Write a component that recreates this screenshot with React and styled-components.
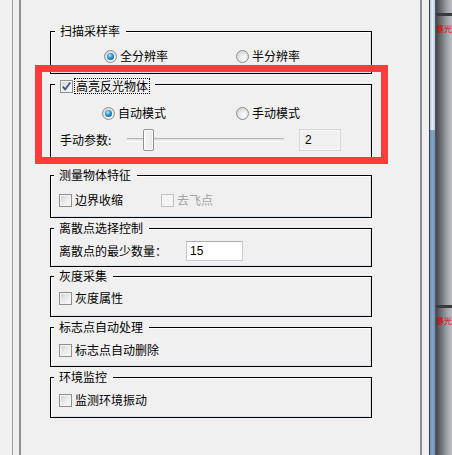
import React from "react";
import styled, { createGlobalStyle } from "styled-components";

const GlobalStyle = createGlobalStyle`
  html, body {
    margin: 0;
    padding: 0;
    background: #f0f0f0;
  }
  body {
    font-family: "Noto Sans CJK SC", "Liberation Sans", sans-serif;
    font-size: 12px;
    line-height: 14px;
    color: #000;
  }
`;

const Shell = styled.div`
  display: flex;
  width: 452px;
  height: 455px;
  overflow: hidden;
  background: #f0f0f0;
`;

const Gutter = styled.div`
  width: 12px;
  flex: none;
`;

const Frame = styled.div`
  box-sizing: border-box;
  width: 7px;
  flex: none;
  border-left: 1px solid #999ea6;
`;

const Panel = styled.div`
  position: relative;
  box-sizing: border-box;
  width: 403px;
  flex: none;
  border-left: 2px solid #8c9098;
  border-right: 2px solid #8c9098;
  padding-top: 31px;
`;

const Spacer = styled.div`
  width: 7px;
  flex: none;
`;

const Scroll = styled.div`
  box-sizing: border-box;
  width: 7px;
  flex: none;
  display: flex;
  flex-direction: column;
  border-left: 1px solid #34404e;
  border-right: 1px solid #4b5663;
  background: linear-gradient(to right, #b7c8d9, #e4ecf4, #b9cadb);
`;

const ScrollThumb = styled.div`
  margin-top: 130px;
  flex: 1;
  background: linear-gradient(to right, #7090b3, #89a4c2, #7391b4);
`;

const Side = styled.div`
  flex: 1;
  min-width: 0;
  padding-top: 13px;
  background: linear-gradient(to right, #44474c, #70747a 35%, #a7abb0 75%, #b9bcc0);
`;

const SideBlock = styled.div`
  height: 292px;
`;

const SideBar = styled.div`
  height: 3px;
  background: #3a3b3d;
`;

const SideLabel = styled.div`
  margin-top: 8px;
  color: #e00000;
  font-size: 8px;
  line-height: 10px;
  white-space: nowrap;
`;

const Group = styled.section`
  box-sizing: border-box;
  width: 322px;
  height: ${(p) => p.$h}px;
  margin: ${(p) => p.$mt ?? 10}px 0 0 29px;
  border: 1px solid #000;
  box-shadow: inset 1px 1px 0 #fff, inset -1px -1px 0 #dde3ea;
`;

const Title = styled.div`
  display: flex;
  align-items: center;
  width: fit-content;
  height: 14px;
  margin: ${(p) => p.$lift ?? -8}px 0 0 ${(p) => p.$ml ?? 4}px;
  padding: 0 6px 0 5px;
  background: #f0f0f0;
  white-space: nowrap;
`;

const Row = styled.div`
  display: flex;
  align-items: center;
  height: ${(p) => p.$h ?? 14}px;
  margin: ${(p) => p.$mt}px 0 0 ${(p) => p.$ml}px;
`;

const Option = styled.label`
  display: flex;
  align-items: center;
  gap: 3px;
  width: ${(p) => (p.$w ? `${p.$w}px` : "auto")};
  flex: none;
  white-space: nowrap;
  color: ${(p) => (p.$disabled ? "#a3a3a3" : "#000")};
`;

const CheckBox = styled.span`
  box-sizing: border-box;
  display: inline-flex;
  align-items: center;
  justify-content: center;
  width: 13px;
  height: 13px;
  flex: none;
  border: 1px solid ${(p) => (p.$disabled ? "#c2c2c2" : "#8e8f8f")};
  background: ${(p) =>
    p.$disabled
      ? "#f4f4f4"
      : "linear-gradient(135deg, #cfd1d4 0%, #e9eaeb 50%, #fbfbfb 100%)"};
  box-shadow: inset 0 0 0 1px #f4f4f4;
`;

const FocusText = styled.span`
  outline: 1px dotted #000;
  outline-offset: 0;
  padding: 0 1px;
  margin-left: 2px;
`;

const RadioDot = styled.span`
  position: relative;
  box-sizing: border-box;
  width: 13px;
  height: 13px;
  flex: none;
  border-radius: 50%;
  border: 1px solid #8b8d90;
  background: radial-gradient(circle at 60% 65%, #fdfdfd 0%, #e3e3e3 55%, #c9cacc 100%);

  &::after {
    content: "";
    display: ${(p) => (p.$on ? "block" : "none")};
    position: absolute;
    left: 2px;
    top: 2px;
    width: 7px;
    height: 7px;
    border-radius: 50%;
    background: radial-gradient(circle at 40% 35%, #b8ecff 0%, #3aa3dc 35%, #0b5d97 80%, #0a3f6b 100%);
  }
`;

const ParamLabel = styled.span`
  width: 67px;
  flex: none;
`;

const Slider = styled.div`
  position: relative;
  width: 157px;
  height: 22px;
  flex: none;
  display: flex;
  align-items: center;
`;

const Rail = styled.div`
  box-sizing: border-box;
  width: 100%;
  height: 4px;
  border-top: 1px solid #b4b4b4;
  border-bottom: 1px solid #fff;
  background: #e4e6e8;
`;

const Knob = styled.div`
  position: absolute;
  left: ${(p) => p.$pos}px;
  top: 0;
  box-sizing: border-box;
  width: 11px;
  height: 22px;
  border: 1px solid #8f9194;
  border-radius: 2px;
  background: linear-gradient(to right, #f7f7f7, #e6e6e6);
  box-shadow: inset 0 0 0 1px #fff;
`;

const ValueBox = styled.div`
  box-sizing: border-box;
  width: 42px;
  height: 22px;
  margin-left: 15px;
  padding: 3px 0 0 5px;
  border: 1px solid #d3d7dc;
  box-shadow: inset 0 0 0 1px #f7f7f7;
  background: #f0f0f0;
  font-family: "Liberation Sans", sans-serif;
  font-size: 12px;
`;

const FieldLabel = styled.span`
  width: 127px;
  flex: none;
  white-space: nowrap;
`;

const Input = styled.div`
  box-sizing: border-box;
  width: 57px;
  height: 20px;
  padding: 2px 0 0 3px;
  background: #fff;
  border: 1px solid #c5cbd2;
  border-top-color: #abadb3;
  font-family: "Liberation Sans", sans-serif;
  font-size: 12px;
`;

const Highlight = styled.div`
  position: absolute;
  left: 14px;
  top: 65px;
  box-sizing: border-box;
  width: 353px;
  height: 99px;
  border: 7px solid #fc3b3b;
  pointer-events: none;
`;

function Check({ checked, disabled }) {
  return (
    <CheckBox $disabled={disabled}>
      {checked && (
        <svg width="11" height="11" viewBox="0 0 11 11">
          <path
            d="M1.8 5.6 L4.2 8.4 L9.2 1.6"
            fill="none"
            stroke="#3a4e8e"
            strokeWidth="1.7"
          />
        </svg>
      )}
    </CheckBox>
  );
}

function Radio({ on, label, w }) {
  return (
    <Option $w={w}>
      <RadioDot $on={on} />
      {label}
    </Option>
  );
}

function CheckOption({ label, checked, disabled, w }) {
  return (
    <Option $w={w} $disabled={disabled}>
      <Check checked={checked} disabled={disabled} />
      {label}
    </Option>
  );
}

export default function App() {
  return (
    <>
      <GlobalStyle />
      <Shell>
        <Gutter />
        <Frame />
        <Panel>
          <Group $h={43} $mt={0}>
            <Title>扫描采样率</Title>
            <Row $mt={11} $ml={53}>
              <Radio on label="全分辨率" w={132} />
              <Radio label="半分辨率" />
            </Row>
          </Group>

          <Group $h={80} $mt={10}>
            <Title $lift={-6}>
              <Check checked />
              <FocusText>高亮反光物体</FocusText>
            </Title>
            <Row $mt={13} $ml={51}>
              <Radio on label="自动模式" w={134} />
              <Radio label="手动模式" />
            </Row>
            <Row $h={22} $mt={9} $ml={9}>
              <ParamLabel>手动参数:</ParamLabel>
              <Slider>
                <Rail />
                <Knob $pos={16} />
              </Slider>
              <ValueBox>2</ValueBox>
            </Row>
          </Group>

          <Group $h={43} $mt={11}>
            <Title $ml={3}>测量物体特征</Title>
            <Row $mt={11} $ml={8}>
              <CheckOption label="边界收缩" w={102} />
              <CheckOption label="去飞点" disabled />
            </Row>
          </Group>

          <Group $h={39} $mt={10}>
            <Title $ml={3}>离散点选择控制</Title>
            <Row $h={20} $mt={6} $ml={8}>
              <FieldLabel>离散点的最少数量：</FieldLabel>
              <Input>15</Input>
            </Row>
          </Group>

          <Group $h={41} $mt={9}>
            <Title $ml={3}>灰度采集</Title>
            <Row $mt={8} $ml={8}>
              <CheckOption label="灰度属性" />
            </Row>
          </Group>

          <Group $h={40} $mt={10}>
            <Title $ml={3}>标志点自动处理</Title>
            <Row $mt={9} $ml={8}>
              <CheckOption label="标志点自动删除" />
            </Row>
          </Group>

          <Group $h={41} $mt={10}>
            <Title $ml={3}>环境监控</Title>
            <Row $mt={9} $ml={8}>
              <CheckOption label="监测环境振动" />
            </Row>
          </Group>

          <Highlight />
        </Panel>
        <Spacer />
        <Scroll>
          <ScrollThumb />
        </Scroll>
        <Side>
          <SideBlock>
            <SideBar />
            <SideLabel>暴光</SideLabel>
          </SideBlock>
          <SideBlock>
            <SideBar />
            <SideLabel>暴光</SideLabel>
          </SideBlock>
        </Side>
      </Shell>
    </>
  );
}
